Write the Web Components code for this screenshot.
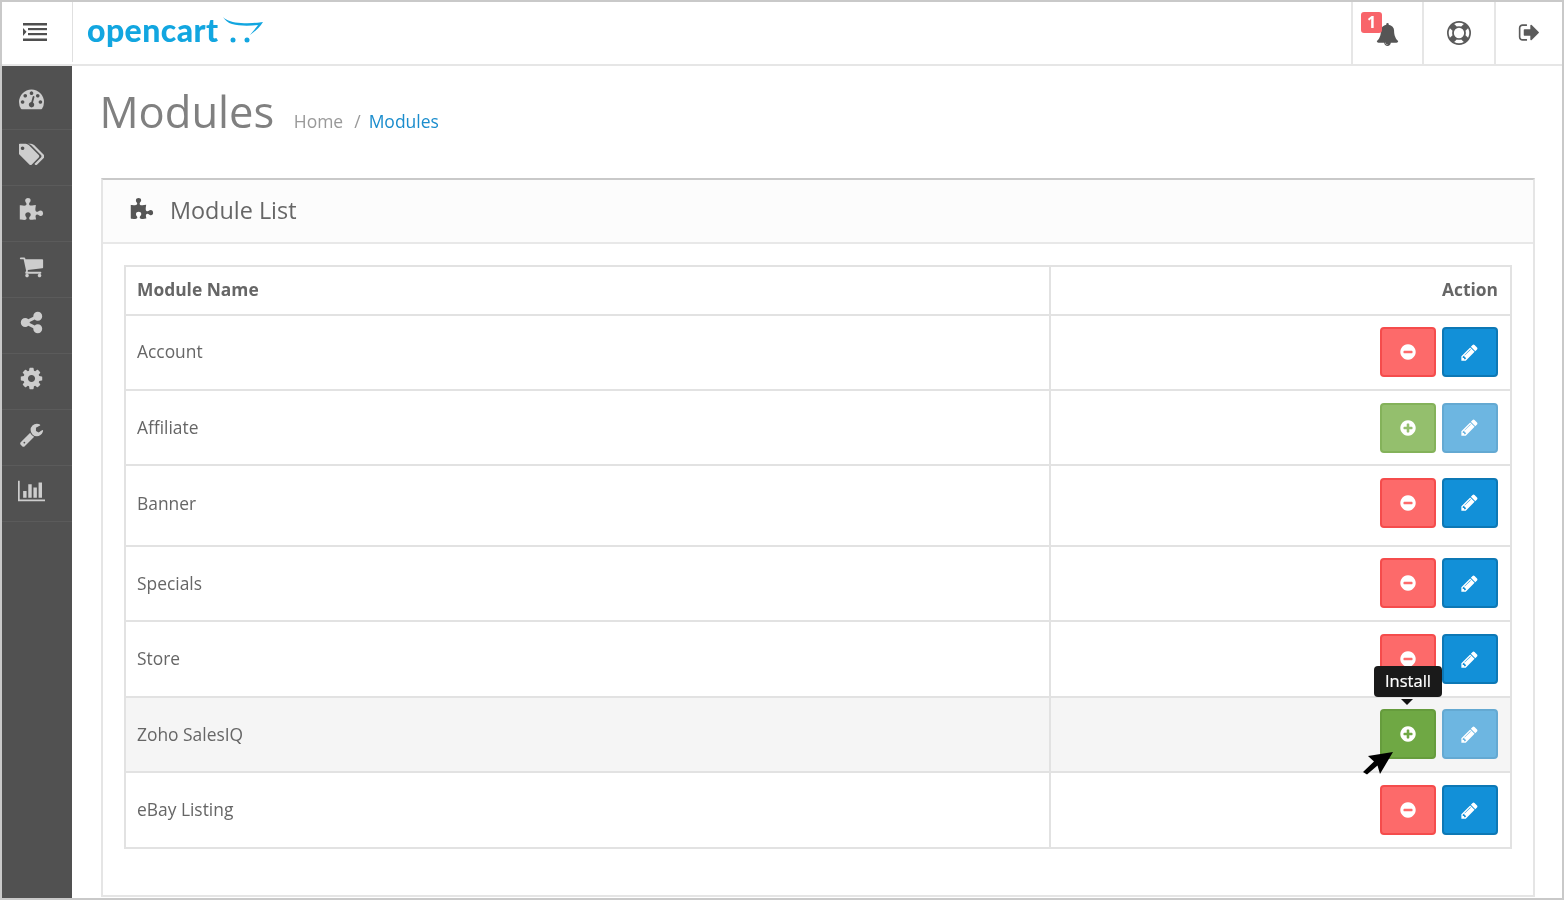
<!DOCTYPE html>
<html lang="en"><head><meta charset="utf-8"><title>Modules</title>
<style>html,body{margin:0;padding:0;background:#fff}body{font-family:"Open Sans","Liberation Sans",sans-serif}</style>
</head><body>
<oc-app>
  <oc-header slot="header"></oc-header>
  <oc-sidebar slot="sidebar">
    <oc-side-item icon="dashboard" first></oc-side-item>
    <oc-side-item icon="tags"></oc-side-item>
    <oc-side-item icon="puzzle"></oc-side-item>
    <oc-side-item icon="cart"></oc-side-item>
    <oc-side-item icon="share"></oc-side-item>
    <oc-side-item icon="cog"></oc-side-item>
    <oc-side-item icon="wrench"></oc-side-item>
    <oc-side-item icon="chart"></oc-side-item>
  </oc-sidebar>
  <oc-page-title></oc-page-title>
  <oc-panel>
    <oc-table>
      <oc-row head h="49" tb="4" name="Module Name"></oc-row>
      <oc-row h="75" pb="1" tb="3" name="Account" state="on"></oc-row>
      <oc-row h="75" tb="2" name="Affiliate" state="off"></oc-row>
      <oc-row h="81" pb="6" tb="6" name="Banner" state="on"></oc-row>
      <oc-row h="75" pb="1" tb="2" name="Specials" state="on"></oc-row>
      <oc-row h="76" tb="2" name="Store" state="on"></oc-row>
      <oc-row h="75" pb="1" tb="2" name="Zoho SalesIQ" state="off" hover></oc-row>
      <oc-row h="74" tb="2" name="eBay Listing" state="on" last></oc-row>
    </oc-table>
  </oc-panel>
</oc-app>
<script>
const P={
dashboard:[1792,"M384 1152q0-53-37.5-90.5t-90.5-37.5-90.5 37.5-37.5 90.5 37.5 90.5 90.5 37.5 90.5-37.5 37.5-90.5zm192-448q0-53-37.5-90.5t-90.5-37.5-90.5 37.5-37.5 90.5 37.5 90.5 90.5 37.5 90.5-37.5 37.5-90.5zm428 481l101-382q6-26-7.5-48.5t-38.5-29.5-48 6.5-30 39.5l-101 382q-60 5-107 43.5t-63 98.5q-20 77 20 146t117 89 146-20 89-117q16-60-6-117t-72-91zm660-33q0-53-37.5-90.5t-90.5-37.5-90.5 37.5-37.5 90.5 37.5 90.5 90.5 37.5 90.5-37.5 37.5-90.5zm-640-640q0-53-37.5-90.5t-90.5-37.5-90.5 37.5-37.5 90.5 37.5 90.5 90.5 37.5 90.5-37.5 37.5-90.5zm448 192q0-53-37.5-90.5t-90.5-37.5-90.5 37.5-37.5 90.5 37.5 90.5 90.5 37.5 90.5-37.5 37.5-90.5zm320 448q0 261-141 483-19 29-54 29h-1402q-35 0-54-29-141-221-141-483 0-182 71-348t191-286 286-191 348-71 348 71 286 191 191 286 71 348z"],
tags:[1792,"M384 448q0-53-37.5-90.5t-90.5-37.5-90.5 37.5-37.5 90.5 37.5 90.5 90.5 37.5 90.5-37.5 37.5-90.5zm1067 576q0 53-37 90l-491 492q-39 37-91 37-53 0-90-37l-715-716q-38-37-64.5-101t-26.5-117v-416q0-52 38-90t90-38h416q53 0 117 26.5t102 64.5l715 714q37 39 37 91zm384 0q0 53-37 90l-491 492q-39 37-91 37-36 0-59-14t-53-45l470-470q37-37 37-90 0-52-37-91l-715-714q-38-38-102-64.5t-117-26.5h224q53 0 117 26.5t102 64.5l715 714q37 39 37 91z"],
puzzle:[1792,"M1728 1098q0 81-44.5 135t-123.5 54q-41 0-77.5-17.5t-59-38-56.5-38-71-17.5q-110 0-110 124 0 39 16 115t15 115v5q-22 0-33 1-34 3-97.5 11.5t-115.5 13.5-98 5q-61 0-103-26.5t-42-83.5q0-37 17.5-71t38-56.5 38-59 17.5-77.5q0-79-54-123.5t-135-44.5q-84 0-143 45.5t-59 127.5q0 43 15 83t33.5 64.5 33.5 53 15 50.5q0 45-46 89-37 35-117 35-95 0-245-24-9-2-27.5-4t-27.5-4l-13-2q-2 0-6-1-4 0-6-1v-1024q2 1 17.5 3.5t34 5 21.5 3.5q150 24 245 24 80 0 117-35 46-44 46-89 0-22-15-50.5t-33.5-53-33.5-64.5-15-83q0-82 59-127.5t144-45.5q80 0 134 44.5t54 123.5q0 41-17.5 77.5t-38 59-38 56.5-17.5 71q0 57 42 83.5t103 26.5q64 0 180-15t163-17v2q-1 2-3.5 17.5t-5 34-3.5 21.5q-24 150-24 245 0 80 35 117 44 46 89 46 22 0 50.5-15t53-33.5 64.5-33.5 83-15q82 0 127.5 59t45.5 143z"],
cart:[1792,"M704 1536q0 52-38 90t-90 38-90-38-38-90 38-90 90-38 90 38 38 90zm896 0q0 52-38 90t-90 38-90-38-38-90 38-90 90-38 90 38 38 90zm128-1088v512q0 24-16.5 42.5t-40.5 21.5l-1044 122q13 60 13 70 0 16-24 64h920q26 0 45 19t19 45-19 45-45 19h-1024q-26 0-45-19t-19-45q0-11 8-31.5t16-36 21.5-40 15.5-29.5l-177-823h-204q-26 0-45-19t-19-45 19-45 45-19h256q16 0 28.5 6.5t19.5 15.5 13 24.5 8 26 5.5 29.5 4.5 26h1201q26 0 45 19t19 45z"],
share:[1792,"M1344 1024q133 0 226.5 93.5t93.5 226.5-93.5 226.5-226.5 93.5-226.5-93.5-93.5-226.5q0-12 2-34l-360-180q-92 86-218 86-133 0-226.5-93.5t-93.5-226.5 93.5-226.5 226.5-93.5q126 0 218 86l360-180q-2-22-2-34 0-133 93.5-226.5t226.5-93.5 226.5 93.5 93.5 226.5-93.5 226.5-226.5 93.5q-126 0-218-86l-360 180q2 22 2 34t-2 34l360 180q92-86 218-86z"],
cog:[1792,"M1152 896q0-106-75-181t-181-75-181 75-75 181 75 181 181 75 181-75 75-181zm512-109v222q0 12-8 23t-20 13l-185 28q-19 54-39 91 35 50 107 138 10 12 10 25t-9 23q-27 37-99 108t-94 71q-12 0-26-9l-138-108q-44 23-91 38-16 136-29 186-7 28-36 28h-222q-14 0-24.5-8.5t-11.5-21.5l-28-184q-49-16-90-37l-141 107q-10 9-25 9-14 0-25-11-126-114-165-168-7-10-7-23 0-12 8-23 15-21 51-66.5t54-70.5q-27-50-41-99l-183-27q-13-2-21-12.5t-8-23.5v-222q0-12 8-23t19-13l186-28q14-46 39-92-40-57-107-138-10-12-10-24 0-10 9-23 26-36 98.5-107.5t94.5-71.5q13 0 26 10l138 107q44-23 91-38 16-136 29-186 7-28 36-28h222q14 0 24.5 8.5t11.5 21.5l28 184q49 16 90 37l142-107q9-9 24-9 13 0 25 10 129 119 165 170 7 8 7 22 0 12-8 23-15 21-51 66.5t-54 70.5q26 50 41 98l183 28q13 2 21 12.5t8 23.5z"],
wrench:[1792,"M448 1472q0-26-19-45t-45-19-45 19-19 45 19 45 45 19 45-19 19-45zm644-420l-682 682q-37 37-90 37-52 0-91-37l-106-108q-38-36-38-90 0-53 38-91l681-681q39 98 114.5 173.5t173.5 114.5zm634-435q0 39-23 106-47 134-164.5 217.5t-258.5 83.5q-185 0-316.5-131.5t-131.5-316.5 131.5-316.5 316.5-131.5q58 0 121.5 16.5t107.5 46.5q16 11 16 28t-16 28l-293 169v224l193 107q5-3 79-48.5t135.5-81 70.5-35.5q15 0 23.5 10t8.5 25z"],
chart:[2048,"M640 896v512h-256v-512h256zm384-512v1024h-256v-1024h256zm1024 1152v128h-2048v-1536h128v1408h1920zm-640-896v768h-256v-768h256zm384-384v1152h-256v-1152h256z"],
bell:[1792,"M912 1696q0-16-16-16-59 0-101.5-42.5t-42.5-101.5q0-16-16-16t-16 16q0 73 51.5 124.5t124.5 51.5q16 0 16-16zm816-288q0 52-38 90t-90 38h-448q0 106-75 181t-181 75-181-75-75-181h-448q-52 0-90-38t-38-90q50-42 91-88t85-119.5 74.5-158.5 50-206 19.5-260q0-152 117-282.5t307-158.5q-8-19-8-39 0-40 28-68t68-28 68 28 28 68q0 20-8 39 190 28 307 158.5t117 282.5q0 139 19.5 260t50 206 74.5 158.5 85 119.5 91 88z"],
ring:[1792,"M896 0q182 0 348 71t286 191 191 286 71 348-71 348-191 286-286 191-348 71-348-71-286-191-191-286-71-348 71-348 191-286 286-191 348-71zm0 128q-190 0-361 90l194 194q82-28 167-28t167 28l194-194q-171-90-361-90zm-678 1129l194-194q-28-82-28-167t28-167l-194-194q-90 171-90 361t90 361zm678 407q190 0 361-90l-194-194q-82 28-167 28t-167-28l-194 194q171 90 361 90zm0-384q159 0 271.5-112.5t112.5-271.5-112.5-271.5-271.5-112.5-271.5 112.5-112.5 271.5 112.5 271.5 271.5 112.5zm484-217l194 194q90-171 90-361t-90-361l-194 194q28 82 28 167t-28 167z"],
signout:[1792,"M704 1440q0 4 1 20t.5 26.5-3 23.5-10 19.5-20.5 6.5h-320q-119 0-203.5-84.5t-84.5-203.5v-704q0-119 84.5-203.5t203.5-84.5h320q13 0 22.5 9.5t9.5 22.5q0 4 1 20t.5 26.5-3 23.5-10 19.5-20.5 6.5h-320q-66 0-113 47t-47 113v704q0 66 47 113t113 47h312l11.5 1 11.5 3 8 5.5 7 9 2 13.5zm928-544q0 26-19 45l-544 544q-19 19-45 19t-45-19-19-45v-288h-448q-26 0-45-19t-19-45v-384q0-26 19-45t45-19h448v-288q0-26 19-45t45-19 45 19l544 544q19 19 19 45z"],
minus:[1792,"M1344 960v-128q0-26-19-45t-45-19h-768q-26 0-45 19t-19 45v128q0 26 19 45t45 19h768q26 0 45-19t19-45zm320-64q0 209-103 385.5t-279.5 279.5-385.5 103-385.5-103-279.5-279.5-103-385.5 103-385.5 279.5-279.5 385.5-103 385.5 103 279.5 279.5 103 385.5z"],
plus:[1792,"M1344 960v-128q0-26-19-45t-45-19h-256v-256q0-26-19-45t-45-19h-128q-26 0-45 19t-19 45v256h-256q-26 0-45 19t-19 45v128q0 26 19 45t45 19h256v256q0 26 19 45t45 19h128q26 0 45-19t19-45v-256h256q26 0 45-19t19-45zm320-64q0 209-103 385.5t-279.5 279.5-385.5 103-385.5-103-279.5-279.5-103-385.5 103-385.5 279.5-279.5 385.5-103 385.5 103 279.5 279.5 103 385.5z"],
pencil:[1792,"M491 1536l91-91-235-235-91 91v107h128v128h107zm523-928q0-22-22-22-10 0-17 7l-542 542q-7 7-7 17 0 22 22 22 10 0 17-7l542-542q7-7 7-17zm-54-192l416 416-832 832h-416v-416zm683 96q0 53-37 90l-166 166-416-416 166-165q36-38 90-38 53 0 91 38l235 234q37 39 37 91z"]
};
function icon(n,size,color,extra){const [w,d]=P[n];const h=size;const wd=size*w/1792;
 return `<svg width="${wd}" height="${h}" viewBox="0 0 ${w} 1792" style="display:block;flex:none;${extra||""}" aria-hidden="true"><path fill="${color}" d="${d}"/></svg>`;}
function def(tag,render){customElements.define(tag,class extends HTMLElement{constructor(){super();this.attachShadow({mode:"open"});}connectedCallback(){this.shadowRoot.innerHTML=render(this);}});}

def("oc-app",()=>`<style>
:host{display:grid;box-sizing:border-box;width:1564px;height:900px;border:2px solid #c9c9c9;overflow:hidden;background:#fff;
 grid-template-columns:70px 1fr;grid-template-rows:64px 1fr;color:#666;font-family:"Open Sans","Liberation Sans",sans-serif;filter:blur(.35px)}
.h{grid-column:1/3}.s{display:block}.m{display:flex;flex-direction:column;padding:0 27px 0 29px;min-width:0}
</style><div class="h"><slot name="header"></slot></div><div class="s"><slot name="sidebar"></slot></div><div class="m"><slot></slot></div>`);

def("oc-header",()=>`<style>
:host{display:flex;box-sizing:border-box;height:64px;border-bottom:2px solid #e6e6e6;background:#fff}
.tog{width:71px;height:60px;box-sizing:border-box;border-right:1px solid #e0e0e0;display:flex;align-items:center;justify-content:center;flex:none;padding:0 5px 1px 0}
.logo{display:flex;align-items:flex-start;padding-left:14px;flex:1;position:relative}
.word{font:900 32px/56px Lato,"Open Sans",sans-serif;color:#12a6e0;letter-spacing:.42px}
.cart{display:block;margin:14px 0 0 3px}
.c{display:flex;align-items:center;justify-content:center;box-sizing:border-box;border-left:2px solid #e6e6e6;height:62px;position:relative;flex:none}
.badge{position:absolute;left:8px;top:10px;width:21px;height:21px;background:#f8646a;border-radius:3px;color:#fff;font:700 16px/21px "Open Sans",sans-serif;text-align:center;z-index:1}
</style>
<div class="tog"><svg width="24" height="18" viewBox="0 0 24 18"><g fill="#4f4f4f"><rect x="0" y="0" width="24" height="2.500"/><rect x="5" y="5" width="19" height="2.200"/><rect x="5" y="10" width="19" height="2.200"/><rect x="0" y="15.500" width="24" height="2.500"/><path d="M0 5l3.500 3.800L0 13z"/></g></svg></div>
<div class="logo"><span class="word">opencart</span><svg class="cart" width="44" height="28" viewBox="0 0 44 28"><path d="M2 1C6 5 12 6.500 20 7c8 .5 15 0 22-1-3 5-8 9.500-13 13 3-4 6-7 8-10-9 1-19 1-26-1C7 7 4 4 2 1z" fill="#12a6e0"/><circle cx="12" cy="24" r="2.500" fill="#12a6e0"/><circle cx="26" cy="24" r="2.500" fill="#12a6e0"/></svg></div>
<div class="c" style="width:71px"><span class="badge">1</span><span style="margin:3px 0 0 -1px">${icon("bell",23,"#555")}</span></div>
<div class="c" style="width:72px;padding-bottom:1px">${icon("ring",24,"#5b5b5b")}</div>
<div class="c" style="width:68px;padding-bottom:1px">${icon("signout",23,"#5b5b5b")}</div>`);

def("oc-sidebar",()=>`<style>:host{display:block;background:#515151;height:100%}</style><slot></slot>`);
def("oc-side-item",e=>{const first=e.hasAttribute("first");const n=e.getAttribute("icon");
 return `<style>:host{display:flex;align-items:center;justify-content:center;box-sizing:border-box;height:${first?64:56}px;border-bottom:1px solid #5b5b5b;padding:${first?"1px":"0"} 11px ${first?"0":"6px"} 0}</style>${icon(n,n==="chart"?24:25,"#cdcdcd")}`;});

def("oc-page-title",()=>`<style>
:host{display:flex;align-items:baseline;height:112px;box-sizing:border-box;padding-top:16px}
h1{margin:0 0 0 -1.500px;font:400 43.500px/60px "Open Sans",sans-serif;color:#808080}
nav{margin-left:19.500px;font-size:17.500px;color:#999;display:flex}
a{color:#1b8dcd;text-decoration:none}
.s{margin:0 8px 0 11px}
</style><h1>Modules</h1><nav><span>Home</span><span class="s">/</span><a>Modules</a></nav>`);

def("oc-panel",()=>`<style>
:host{display:flex;flex-direction:column;box-sizing:border-box;height:719px;border:2px solid #e5e5e5;border-top-color:#c9c9c9}
header{display:flex;align-items:center;gap:16px;height:64px;box-sizing:border-box;padding:0 0 2px 27px;background:#fcfcfc;border-bottom:2px solid #e8e8e8;font-size:23.400px;color:#666;flex:none}
main{padding:21px}
</style><header>${icon("puzzle",24,"#555")}<span>Module List</span></header><main><slot></slot></main>`);

def("oc-table",()=>`<style>:host{display:block;border:2px solid #e2e2e2}</style><slot></slot>`);

const BTN={on:{red:["#fd6a6a","#f54c4c","minus"],blue:["#1290d8","#0d78b5"]},
 off:{red:["#94bf6d","#84b25a","plus"],blue:["#6db6e1","#64a9d2"]},
 hover:{red:["#6fa844","#669c3d","plus"],blue:["#6db6e1","#64a9d2"]}};
def("oc-row",e=>{
 const h=e.getAttribute("h"),head=e.hasAttribute("head"),last=e.hasAttribute("last"),hov=e.hasAttribute("hover"),pb=e.getAttribute("pb")||0,tb=e.getAttribute("tb")||0;
 const s=hov?BTN.hover:BTN[e.getAttribute("state")||"on"];
 const a=head?`<b>Action</b>`:`<oc-btn bg="${s.red[0]}" bd="${s.red[1]}" icon="${s.red[2]}" ${hov?"tip":""}></oc-btn><oc-btn bg="${s.blue[0]}" bd="${s.blue[1]}" icon="pencil"></oc-btn>`;
 return `<style>
:host{display:grid;grid-template-columns:1fr 461px;box-sizing:border-box;height:${h}px;${last?"":"border-bottom:2px solid #e2e2e2;"}${hov?"background:#f5f5f5;":""}font-size:17.400px;color:#666}
.n{display:flex;align-items:center;padding:0 0 ${tb}px 11px}
.a{display:flex;align-items:center;justify-content:flex-end;gap:6px;padding:0 12px ${head?tb:pb}px 0;border-left:2px solid #e2e2e2}
b{font-weight:700;color:#666}
</style><div class="n">${head?`<b>${e.getAttribute("name")}</b>`:e.getAttribute("name")}</div><div class="a">${a}</div>`;});

def("oc-btn",e=>{const tip=e.hasAttribute("tip"),n=e.getAttribute("icon");return `<style>
:host{display:flex;align-items:center;justify-content:center;box-sizing:border-box;width:56px;height:50px;border:2px solid ${e.getAttribute("bd")};border-radius:4px;background:${e.getAttribute("bg")};position:relative}
.tip{position:absolute;left:-8px;top:-45px;width:68px;height:31px;background:#1a1a1a;border-radius:4px;color:#fff;font-size:16.500px;line-height:30px;text-align:center;-webkit-text-stroke:.2px #fff}
.tip::after{content:"";position:absolute;left:27px;top:33px;border:6px solid transparent;border-top-color:#111;border-bottom:0}
.cur{position:absolute;left:-20px;top:40px;display:block}
</style>${icon(n,n==="pencil"?19:18,"#fff",n==="pencil"?"transform:translateX(-1px)":"")}${tip?`<div class="tip">Install</div><svg class="cur" width="32" height="26" viewBox="0 0 32 26"><path d="M31 1L6 5l6 5.500L1 21l4 2.500L15.500 14.500 18 23z" fill="#000"/></svg>`:""}`;});
</script>
</body></html>
